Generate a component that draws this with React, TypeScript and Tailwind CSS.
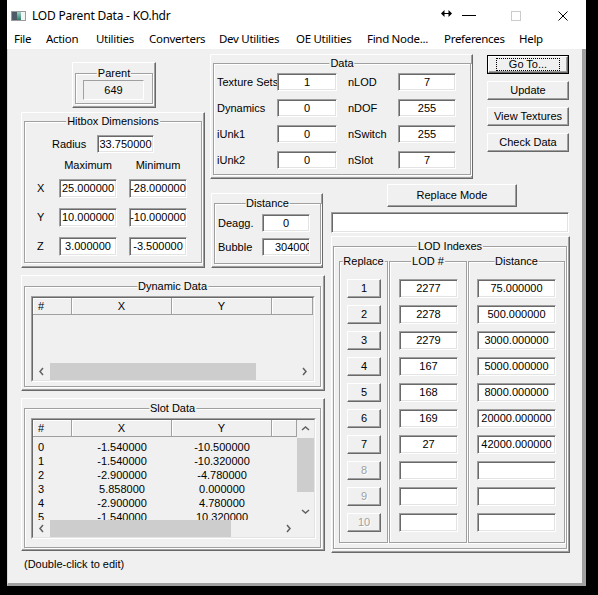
import React from 'react';

const raised =
  'border border-t-white border-l-white border-r-[#696969] border-b-[#696969] shadow-[inset_-1px_-1px_0_#a0a0a0]';
const etched = 'border border-[#a0a0a0] shadow-[inset_1px_1px_0_#fff,1px_1px_0_#fff]';
const sunken =
  'border border-t-[#a0a0a0] border-l-[#a0a0a0] border-r-white border-b-white shadow-[inset_1px_1px_0_#696969,inset_-1px_-1px_0_#e3e3e3]';

function Edit({ value = '', className = '' }: { value?: string; className?: string }) {
  return (
    <div className={`relative bg-white ${sunken} flex items-center justify-center overflow-hidden whitespace-nowrap ${className}`}>
      {value}
    </div>
  );
}

function Btn({
  children,
  className = '',
  disabled = false,
}: {
  children: React.ReactNode;
  className?: string;
  disabled?: boolean;
}) {
  return (
    <button
      type="button"
      className={`${raised} bg-[#f0f0f0] flex items-center justify-center whitespace-nowrap leading-[13px] ${
        disabled ? 'text-[#a0a0a0] [text-shadow:1px_1px_0_#fff]' : ''
      } ${className}`}
    >
      {children}
    </button>
  );
}

function Panel({
  title,
  className = '',
  boxClassName = '',
  children,
}: {
  title: string;
  className?: string;
  boxClassName?: string;
  children?: React.ReactNode;
}) {
  return (
    <div className={`${raised} flex flex-col ${className}`}>
      <div className={`relative flex-1 ${etched} ${boxClassName}`}>
        <span className="absolute left-1/2 top-[-7px] -translate-x-1/2 bg-[#f0f0f0] px-px leading-[13px] whitespace-nowrap">
          {title}
        </span>
        {children}
      </div>
    </div>
  );
}

function SubGroup({ title, className = '', children }: { title: string; className?: string; children: React.ReactNode }) {
  return (
    <div className={`relative h-[282px] ${etched} flex flex-col gap-[7px] pt-[17px] ${className}`}>
      <span className="absolute left-1/2 top-[-7px] -translate-x-1/2 bg-[#f0f0f0] px-px leading-[13px] whitespace-nowrap">
        {title}
      </span>
      {children}
    </div>
  );
}

function Chevron({ dir }: { dir: 'left' | 'right' | 'up' | 'down' }) {
  const horizontal = dir === 'left' || dir === 'right';
  const pts = {
    left: '5,1 2,4.5 5,8',
    right: '2,1 5,4.5 2,8',
    up: '1,5 4.5,2 8,5',
    down: '1,2 4.5,5 8,2',
  }[dir];
  return (
    <svg width={horizontal ? 7 : 9} height={horizontal ? 9 : 7} viewBox={horizontal ? '0 0 7 9' : '0 0 9 7'}>
      <polyline points={pts} fill="none" stroke="#606060" strokeWidth="1.5" />
    </svg>
  );
}

function HScroll({ thumb }: { thumb: string }) {
  return (
    <div className="h-[17px] flex bg-[#f0f0f0] shrink-0">
      <div className="w-[17px] flex items-center justify-center">
        <Chevron dir="left" />
      </div>
      <div className="flex-1 flex">
        <div className={`h-full bg-[#cdcdcd] ${thumb}`} />
      </div>
      <div className="w-[17px] flex items-center justify-center">
        <Chevron dir="right" />
      </div>
    </div>
  );
}

function ListHeader({ lastWidth }: { lastWidth: string }) {
  const cell = 'h-full border-r border-b border-[#a0a0a0] shadow-[inset_1px_1px_0_#fff] flex items-center';
  return (
    <div className="h-[17px] flex shrink-0 bg-[#f0f0f0]">
      <div className={`${cell} w-[39px] pl-[5px]`}>#</div>
      <div className={`${cell} w-[100px] justify-center`}>X</div>
      <div className={`${cell} w-[100px] justify-center`}>Y</div>
      <div className={`${cell} ${lastWidth}`} />
    </div>
  );
}

const slotRows = [
  ['0', '-1.540000', '-10.500000'],
  ['1', '-1.540000', '-10.320000'],
  ['2', '-2.900000', '-4.780000'],
  ['3', '5.858000', '0.000000'],
  ['4', '-2.900000', '4.780000'],
  ['5', '-1.540000', '10.320000'],
];

const dataRows = [
  ['Texture Sets', '1', 'nLOD', '7'],
  ['Dynamics', '0', 'nDOF', '255'],
  ['iUnk1', '0', 'nSwitch', '255'],
  ['iUnk2', '0', 'nSlot', '7'],
];

const hitboxRows = [
  ['X', '25.000000', '-28.000000'],
  ['Y', '10.000000', '-10.000000'],
  ['Z', '3.000000', '-3.500000'],
];

const lodRows = [
  ['2277', '75.000000'],
  ['2278', '500.000000'],
  ['2279', '3000.000000'],
  ['167', '5000.000000'],
  ['168', '8000.000000'],
  ['169', '20000.000000'],
  ['27', '42000.000000'],
  ['', ''],
  ['', ''],
  ['', ''],
];

const menu = [
  ['File', 'w-[32px]'],
  ['Action', 'w-[50px]'],
  ['Utilities', 'w-[53px]'],
  ['Converters', 'w-[70px]'],
  ['Dev Utilities', 'w-[77px]'],
  ['OE Utilities', 'w-[71px]'],
  ['Find Node...', 'w-[77px]'],
  ['Preferences', 'w-[75px]'],
  ['Help', 'w-[40px]'],
];

function TitleBar() {
  return (
    <div className="h-[29px] bg-white flex items-start font-['Noto_Sans',sans-serif] text-[12px] leading-[16px] shrink-0">
      <svg className="ml-[4px] mt-[11px]" width="15" height="10" viewBox="0 0 15 10">
        <defs>
          <linearGradient id="ig" x1="0" y1="0" x2="0" y2="1">
            <stop offset="0" stopColor="#9fd0c2" />
            <stop offset="1" stopColor="#2d7d68" />
          </linearGradient>
        </defs>
        <rect x="0.5" y="0.5" width="14" height="9" fill="#f4f4f4" stroke="#9a9a9a" />
        <rect x="1" y="1" width="5" height="8" fill="#4d5b68" />
        <rect x="6" y="1" width="4" height="8" fill="url(#ig)" />
      </svg>
      <span className="ml-[6px] mt-[8px] tracking-[-0.2px]">LOD Parent Data - KO.hdr</span>
      <div className="flex-1" />
      <svg className="mt-[10px]" width="11" height="7" viewBox="0 0 11 7">
        <polygon points="0,3.5 3.5,0 3.5,7" fill="#000" />
        <polygon points="11,3.5 7.5,0 7.5,7" fill="#000" />
        <rect x="3" y="3" width="5" height="1" fill="#000" />
      </svg>
      <svg className="ml-[10px] mt-[15px]" width="14" height="1" viewBox="0 0 14 1">
        <rect width="14" height="1" fill="#000" />
      </svg>
      <svg className="ml-[35px] mt-[11px]" width="10" height="10" viewBox="0 0 10 10">
        <rect x="0.5" y="0.5" width="9" height="9" fill="none" stroke="#cccccc" />
      </svg>
      <svg className="ml-[37px] mr-[18px] mt-[11px]" width="10" height="10" viewBox="0 0 10 10">
        <path d="M0.5 0.5L9.5 9.5M9.5 0.5L0.5 9.5" stroke="#000" strokeWidth="1" />
      </svg>
    </div>
  );
}

function MenuBar() {
  return (
    <div className="h-[20px] bg-white flex items-center pl-[7px] font-['Noto_Sans',sans-serif] text-[11.5px] tracking-[-0.3px] leading-[16px] shrink-0">
      {menu.map(([label, w]) => (
        <span key={label} className={`${w} shrink-0 whitespace-nowrap`}>
          {label}
        </span>
      ))}
    </div>
  );
}

export default function App() {
  return (
    <div className="w-[598px] h-[595px] bg-black overflow-hidden text-[11px] leading-[13px] text-black font-['Liberation_Sans',Arial,sans-serif]">
      <div className="ml-[7px] w-[579px] h-[586px] flex flex-col">
        <TitleBar />
        <MenuBar />
        <div className="flex-1 bg-[#f0f0f0] border-l border-l-[#d8d8d8] border-r-[4px] border-r-[#a0a0a0] border-b-[3px] border-b-[#a0a0a0] pl-[13px] pt-[4px]">
          <div className="grid grid-cols-[186px_122px_152px_90px] grid-rows-[55px_72px_90px_283px_auto] items-start justify-items-start">
            {/* Parent */}
            <Panel
              title="Parent"
              className="col-start-1 row-start-1 ml-[51px] mt-[9px] w-[84px] h-[46px]"
              boxClassName="mt-[10px] mx-[2px] mb-[3px]"
            >
              <div className="ml-[7px] mt-[6px] w-[61px] h-[20px] border border-t-[#a0a0a0] border-l-[#a0a0a0] border-r-white border-b-white flex items-center justify-center">
                649
              </div>
            </Panel>

            {/* Hitbox Dimensions */}
            <Panel
              title="Hitbox Dimensions"
              className="col-start-1 row-start-2 row-span-2 mt-[4px] w-[184px] h-[156px]"
              boxClassName="mt-[8px] mx-[2px] mb-[4px]"
            >
              <div className="flex items-center ml-[27px] mt-[13px]">
                <span className="w-[45px]">Radius</span>
                <Edit value="33.750000" className="w-[57px] h-[18px]" />
              </div>
              <div className="flex ml-[34px] mt-[6px] h-[13px]">
                <span className="w-[58px] text-center">Maximum</span>
                <span className="ml-[12px] w-[58px] text-center">Minimum</span>
              </div>
              <div className="flex flex-col gap-[10px] mt-[7px]">
                {hitboxRows.map(([axis, max, min]) => (
                  <div key={axis} className="flex items-center">
                    <span className="w-[34px] pl-[12px]">{axis}</span>
                    <Edit value={max} className="w-[58px] h-[19px]" />
                    <Edit value={min} className="ml-[12px] w-[58px] h-[19px]" />
                  </div>
                ))}
              </div>
            </Panel>

            {/* Data */}
            <Panel
              title="Data"
              className="col-start-2 col-span-2 row-start-1 row-span-2 ml-[3px] mt-[1px] w-[263px] h-[125px]"
              boxClassName="mt-[8px] ml-[2px] mr-[1px] mb-[3px]"
            >
              <div className="flex flex-col gap-[8px] mt-[9px] pl-[3px]">
                {dataRows.map(([l1, v1, l2, v2]) => (
                  <div key={l1} className="flex items-center">
                    <span className="w-[60px] whitespace-nowrap">{l1}</span>
                    <Edit value={v1} className="w-[60px] h-[18px]" />
                    <span className="ml-[11px] w-[50px] whitespace-nowrap">{l2}</span>
                    <Edit value={v2} className="w-[58px] h-[18px]" />
                  </div>
                ))}
              </div>
            </Panel>

            {/* Buttons */}
            <div className="col-start-4 row-start-1 row-span-2 ml-[6px] mt-[2px] w-[82px] flex flex-col gap-[7px]">
              <div className="h-[19px] w-full border border-black flex">
                <div className={`${raised} flex-1 bg-[#f0f0f0] flex items-center justify-center`}>
                  <span className="outline outline-1 outline-dotted outline-black px-[12px] leading-[11px]">Go To...</span>
                </div>
              </div>
              <Btn className="h-[19px] w-full">Update</Btn>
              <Btn className="h-[19px] w-full">View Textures</Btn>
              <Btn className="h-[19px] w-full">Check Data</Btn>
            </div>

            {/* Distance */}
            <Panel
              title="Distance"
              className="col-start-2 row-start-3 ml-[4px] mt-[13px] w-[112px] h-[75px]"
              boxClassName="mt-[9px] ml-[2px] mr-[1px] mb-[3px]"
            >
              <div className="flex flex-col gap-[6px] mt-[10px] pl-[3px]">
                <div className="flex items-center">
                  <span className="w-[44px]">Deagg.</span>
                  <Edit value="0" className="w-[48px] h-[18px]" />
                </div>
                <div className="flex items-center">
                  <span className="w-[44px]">Bubble</span>
                  <div className={`relative bg-white ${sunken} w-[48px] h-[18px] flex items-center overflow-hidden whitespace-nowrap pl-[12px]`}>
                    304000
                  </div>
                </div>
              </div>
            </Panel>

            {/* Right stack: Replace Mode, status field, LOD Indexes */}
            <div className="col-start-3 col-span-2 row-start-3 row-span-2 flex flex-col">
              <Btn className="ml-[58px] mt-[4px] w-[130px] h-[23px]">Replace Mode</Btn>
              <Edit className="ml-[2px] mt-[5px] w-[238px] h-[21px]" />
              <Panel
                title="LOD Indexes"
                className="ml-[2px] mt-[3px] w-[239px] h-[317px]"
                boxClassName="mt-[9px] ml-[1px] mr-[2px] mb-[3px]"
              >
                <div className="flex ml-[5px] mt-[14px] gap-[1px]">
                  <SubGroup title="Replace" className="w-[49px] pl-[7px]">
                    {lodRows.map((_, i) => (
                      <Btn key={i} className="w-[34px] h-[19px]" disabled={i >= 7}>
                        {i + 1}
                      </Btn>
                    ))}
                  </SubGroup>
                  <SubGroup title="LOD #" className="w-[78px] pl-[9px]">
                    {lodRows.map(([lod], i) => (
                      <Edit key={i} value={lod} className="w-[59px] h-[19px]" />
                    ))}
                  </SubGroup>
                  <SubGroup title="Distance" className="w-[97px] pl-[8px]">
                    {lodRows.map(([, dist], i) => (
                      <Edit key={i} value={dist} className="w-[79px] h-[19px]" />
                    ))}
                  </SubGroup>
                </div>
              </Panel>
            </div>

            {/* Left stack: Dynamic Data, Slot Data */}
            <div className="col-start-1 col-span-2 row-start-4 flex flex-col">
              <Panel
                title="Dynamic Data"
                className="mt-[5px] w-[304px] h-[116px]"
                boxClassName="mt-[10px] ml-[2px] mr-[3px] mb-[3px]"
              >
                <div className="ml-[6px] mt-[9px] w-[284px] h-[86px] border border-t-[#a0a0a0] border-l-[#a0a0a0] border-r-white border-b-white">
                  <div className="h-full border border-t-[#696969] border-l-[#696969] border-r-[#e3e3e3] border-b-[#e3e3e3] flex flex-col">
                    <ListHeader lastWidth="flex-1" />
                    <div className="flex-1" />
                    <HScroll thumb="w-[206px]" />
                  </div>
                </div>
              </Panel>

              <Panel
                title="Slot Data"
                className="mt-[7px] w-[304px] h-[153px]"
                boxClassName="mt-[9px] ml-[2px] mr-[3px] mb-[2px]"
              >
                <div className="ml-[6px] mt-[9px] w-[285px] h-[121px] border border-t-[#a0a0a0] border-l-[#a0a0a0] border-r-white border-b-white">
                  <div className="h-full border border-t-[#696969] border-l-[#696969] border-r-[#e3e3e3] border-b-[#e3e3e3] flex">
                    <div className="flex-1 flex flex-col min-w-0">
                      <ListHeader lastWidth="flex-1" />
                      <div className="flex-1 overflow-hidden pt-[3px]">
                        {slotRows.map(([n, x, y]) => (
                          <div key={n} className="flex h-[14px] leading-[14px]">
                            <span className="w-[39px] pl-[5px]">{n}</span>
                            <span className="w-[100px] text-center">{x}</span>
                            <span className="w-[100px] text-center">{y}</span>
                          </div>
                        ))}
                      </div>
                      <HScroll thumb="w-[181px]" />
                    </div>
                    <div className="w-[17px] flex flex-col bg-[#f0f0f0]">
                      <div className="h-[17px] flex items-center justify-center">
                        <Chevron dir="up" />
                      </div>
                      <div className="flex-1 flex flex-col">
                        <div className="mt-px h-[54px] bg-[#cdcdcd]" />
                      </div>
                      <div className="h-[17px] flex items-center justify-center">
                        <Chevron dir="down" />
                      </div>
                      <div className="h-[17px]" />
                    </div>
                  </div>
                </div>
              </Panel>
            </div>

            {/* Footer hint */}
            <div className="col-start-1 col-span-4 row-start-5 ml-[3px] mt-[5px]">(Double-click to edit)</div>
          </div>
        </div>
      </div>
    </div>
  );
}
